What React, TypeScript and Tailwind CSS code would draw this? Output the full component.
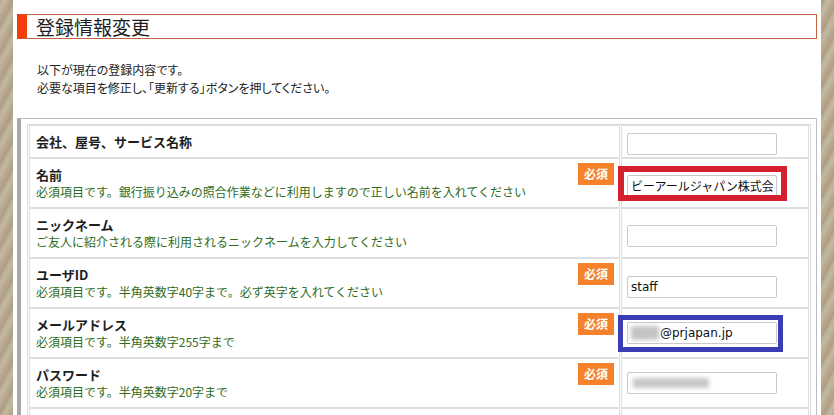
import React from 'react';

type Row = {
    label: string;
    note?: string;
    required?: boolean;
    value?: string;
    mark?: 'red' | 'blue';
    blur?: 'email' | 'password';
};

const rows: Row[] = [
    { label: '会社、屋号、サービス名称' },
    {
        label: '名前',
        note: '必須項目です。銀行振り込みの照合作業などに利用しますので正しい名前を入れてください',
        required: true,
        value: 'ビーアールジャパン株式会社',
        mark: 'red',
    },
    { label: 'ニックネーム', note: 'ご友人に紹介される際に利用されるニックネームを入力してください' },
    { label: 'ユーザID', note: '必須項目です。半角英数字40字まで。必ず英字を入れてください', required: true, value: 'staff' },
    { label: 'メールアドレス', note: '必須項目です。半角英数字255字まで', required: true, blur: 'email', mark: 'blue' },
    { label: 'パスワード', note: '必須項目です。半角英数字20字まで', required: true, blur: 'password' },
];

function Field({ row }: { row: Row }) {
    const box = 'h-[22px] w-[150px] rounded-[2px] border border-[#c9c9c9] bg-white px-[3px] text-[12px] text-[#111] outline-none';
    return (
        <div className="relative h-[22px] w-[150px]">
            {row.blur === 'email' ? (
                <div className={`${box} flex items-center font-['DejaVu_Sans',sans-serif]`}>
                    <span className="mr-[1px] inline-block h-[14px] w-[28px] bg-[#c4c4c4] blur-[2px]" />
                    <span>@prjapan.jp</span>
                </div>
            ) : row.blur === 'password' ? (
                <div className={`${box} flex items-center`}>
                    <span className="ml-[2px] inline-block h-[10px] w-[76px] bg-[#c8c8c8] blur-[2px]" />
                </div>
            ) : (
                <input
                    type="text"
                    defaultValue={row.value ?? ''}
                    className={`${box} ${row.value === 'staff' ? "font-['DejaVu_Sans',sans-serif]" : ''}`}
                />
            )}
            {row.mark === 'red' && (
                <span className="pointer-events-none absolute -left-[9px] -top-[6px] h-[35px] w-[169px] border-[6px] border-[#d4202e]" />
            )}
            {row.mark === 'blue' && (
                <span className="pointer-events-none absolute -left-[9px] -top-[7px] h-[37px] w-[165px] border-[5px] border-[#3b3bb3]" />
            )}
        </div>
    );
}

export default function App() {
    return (
        <div className="flex min-h-screen bg-[repeating-linear-gradient(118deg,#b6a98d_0px,#c3b8a1_4px,#b8aa8f_8px,#ab9d82_13px)] font-['Noto_Sans_CJK_JP',sans-serif]">
            <div className="ml-[13px] w-[808px] bg-white px-[4px] pb-10 pt-[14px]">
                <h2 className="flex h-[25px] items-center border border-[#c4623e] border-l-[10px] border-l-[#f23c0a] pl-[9px] text-[19px] leading-none text-[#1e1e1e]">
                    登録情報変更
                </h2>

                <div className="mt-[22px] pl-[20px] text-[12px] leading-[18px] text-[#222] [font-feature-settings:'palt']">
                    <p>以下が現在の登録内容です。</p>
                    <p>必要な項目を修正し、「更新する」ボタンを押してください。</p>
                </div>

                <div className="mt-[21px] border border-l-4 border-[#bdbdbd] border-l-[#a8a8a8] pl-[6px] pr-[5px] pt-[5px]">
                    <table className="w-full border-separate border-spacing-x-px border-spacing-y-0 border border-[#d9d9d9]">
                        <tbody>
                            {rows.map((row) => (
                                <tr key={row.label}>
                                    <td className="h-[33px] border border-[#dedede] py-[7px] pl-[6px] pr-[5px] align-middle">
                                        <div className="flex items-start justify-between">
                                            <div className="text-[12px] leading-[17px]">
                                                <div className="text-[13px] font-bold leading-[17px] text-[#1e1e1e]">{row.label}</div>
                                                {row.note && <div className="leading-[17px] text-[#2e6c22]">{row.note}</div>}
                                            </div>
                                            {row.required && (
                                                <span className="-mt-[3px] flex h-[22px] w-[36px] shrink-0 items-center justify-center bg-[#f5822b] text-[12px] font-bold text-white">
                                                    必須
                                                </span>
                                            )}
                                        </div>
                                    </td>
                                    <td className="w-[188px] border border-[#dedede] px-[5px] py-[4px] align-middle">
                                        <Field row={row} />
                                    </td>
                                </tr>
                            ))}
                            <tr>
                                <td className="h-[50px] border border-[#dedede]" />
                                <td className="h-[50px] w-[188px] border border-[#dedede]" />
                            </tr>
                        </tbody>
                    </table>
                </div>
            </div>
        </div>
    );
}
